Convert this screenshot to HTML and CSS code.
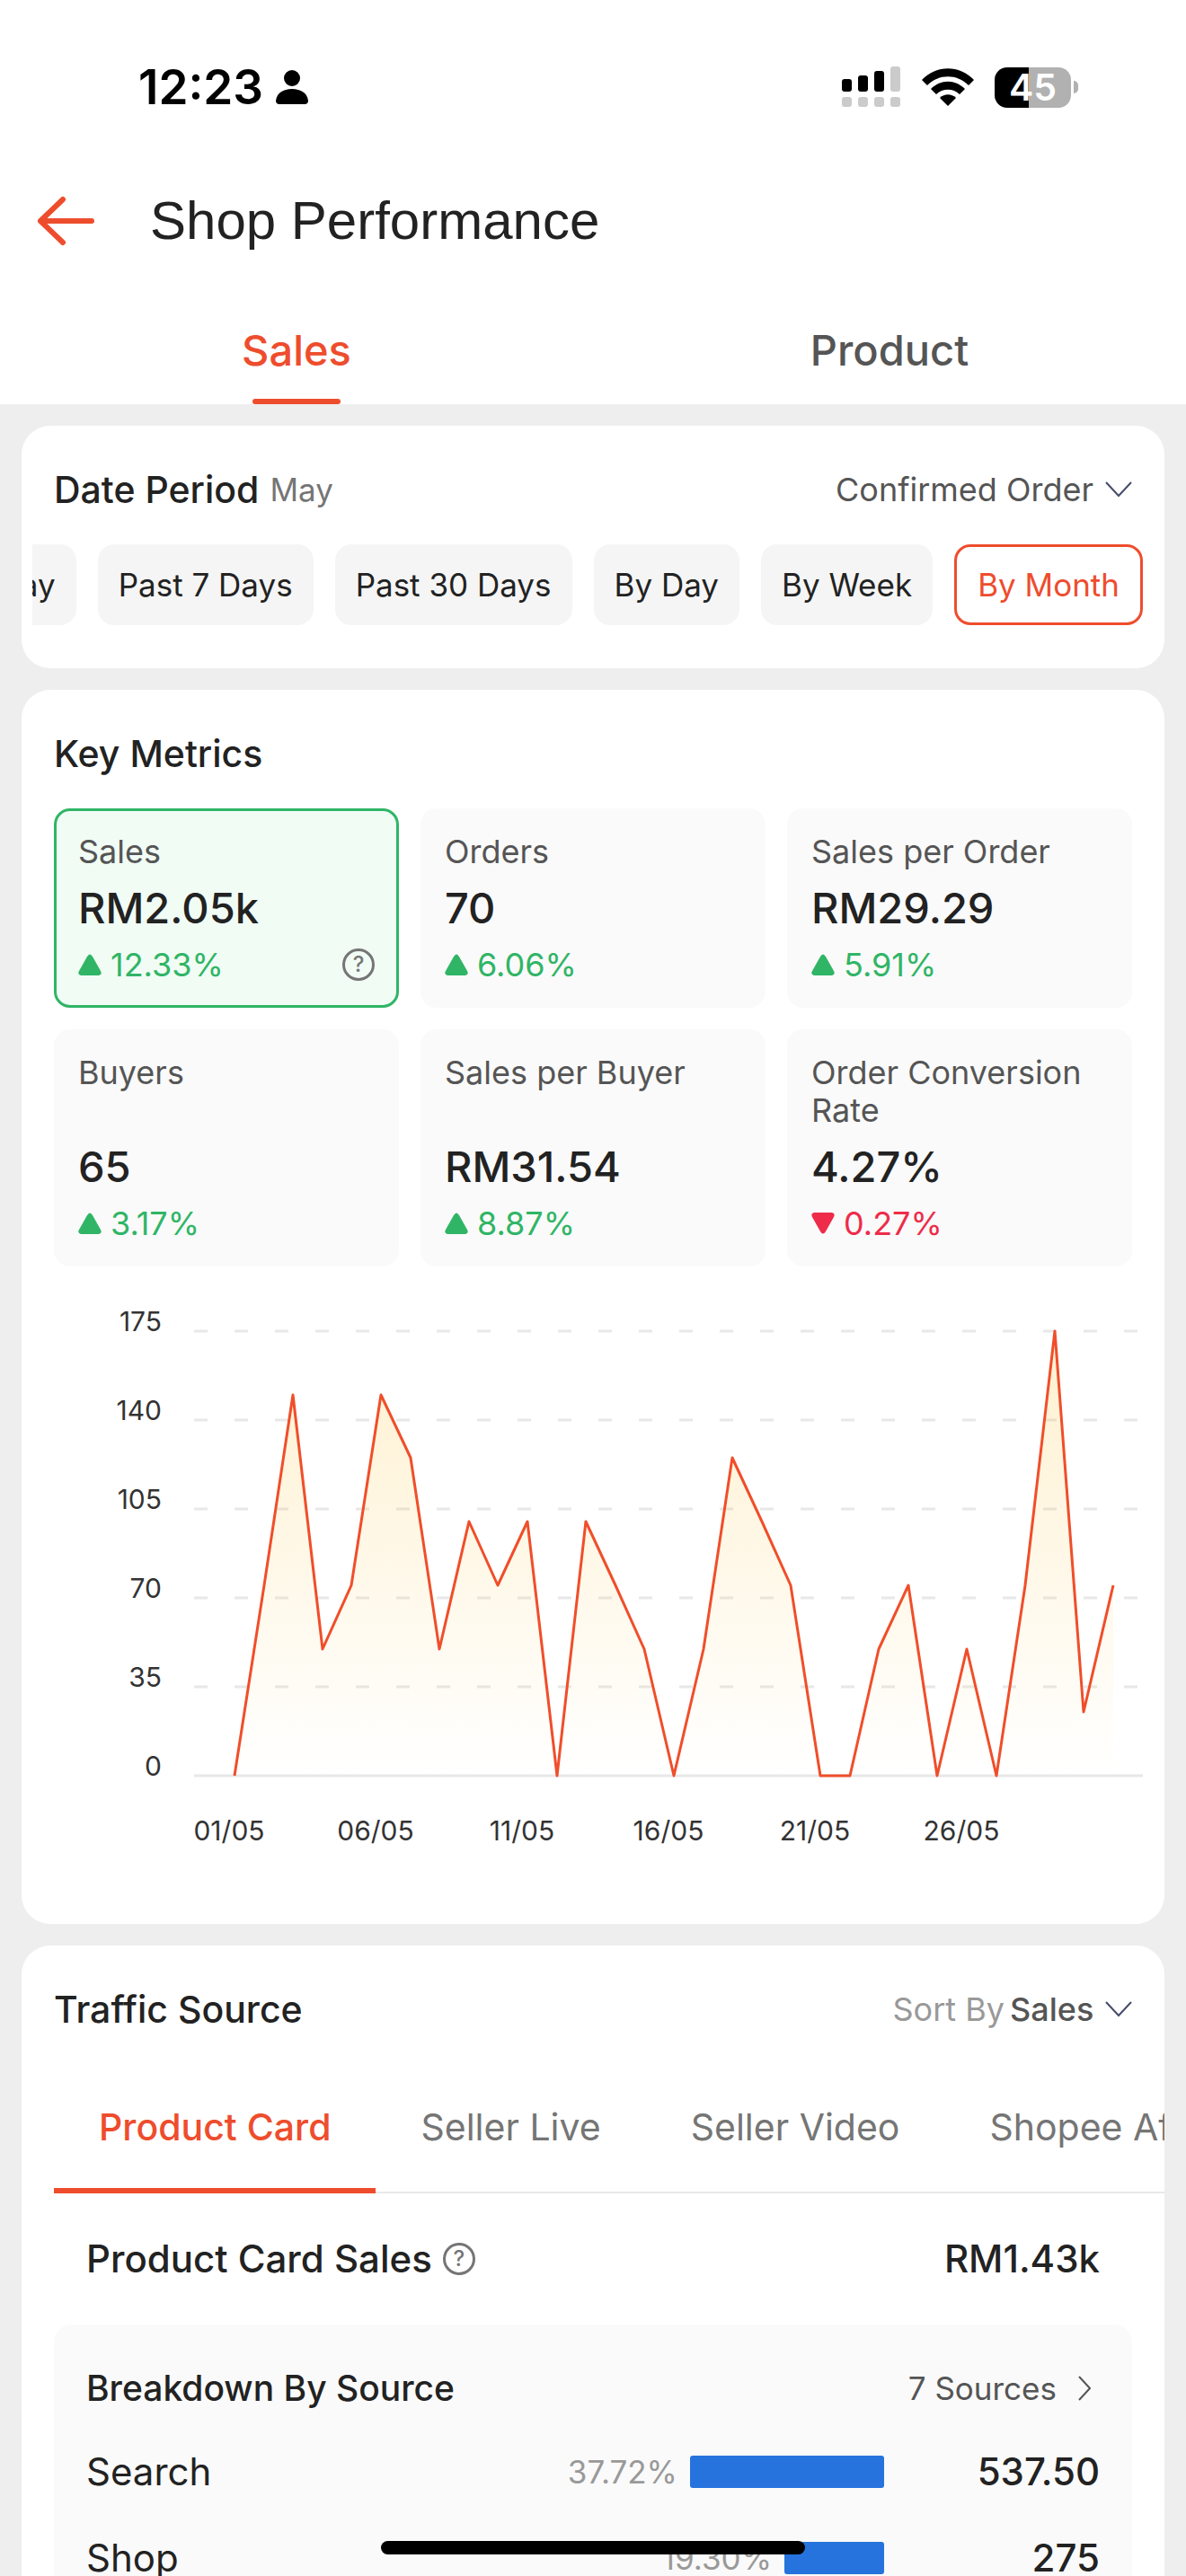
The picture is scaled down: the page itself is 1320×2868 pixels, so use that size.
FILE: index.html
```html
<!DOCTYPE html>
<html lang="en">

<head>
    <meta charset="UTF-8">
    <meta name="viewport" content="width=device-width, initial-scale=1.0">
    <title>Shop Performance</title>
    <link rel="stylesheet" href="styles.css">
</head>

<body>
    <div class="page">
        <header class="top">
            <div class="status-bar">
                <div class="status-left">
                    <span class="time">12:23</span>
                    <svg width="36" height="38" viewBox="0 0 36 38">
                        <ellipse cx="18" cy="9" rx="9" ry="9" />
                        <path d="M4 38 Q0 38 0 34 C1 26 8 21 18 21 C28 21 35 26 36 34 Q36 38 32 38 Z" />
                    </svg>
                </div>
                <div class="status-right">
                    <svg width="66" height="46" viewBox="0 0 66 46">
                        <rect x="0" y="14" width="11" height="14" rx="3" />
                        <rect x="18" y="10" width="11" height="18" rx="3" />
                        <rect x="36" y="5" width="11" height="23" rx="3" />
                        <g fill="#cbcbcb">
                            <rect x="54" y="0" width="11" height="28" rx="3" />
                            <rect x="0" y="34" width="11" height="11" rx="3" />
                            <rect x="18" y="34" width="11" height="11" rx="3" />
                            <rect x="36" y="34" width="11" height="11" rx="3" />
                            <rect x="54" y="34" width="11" height="11" rx="3" />
                        </g>
                    </svg>
                    <svg width="58" height="42" viewBox="0 0 58 42">
                        <path d="M0 13 C16 -4 42 -4 58 13 L52 19 C39 6 19 6 6 19 Z" />
                        <path d="M10 23 C21 12 37 12 48 23 L42 29 C35 22 23 22 16 29 Z" />
                        <path d="M20 33 C25 28 33 28 38 33 L29 42 Z" />
                    </svg>
                    <div class="battery">
                        <span class="battery-body">45</span>
                        <span class="battery-tip"></span>
                    </div>
                </div>
            </div>

            <div class="title-bar">
                <button class="back" aria-label="Back">
                    <svg width="66" height="60" viewBox="0 0 66 60">
                        <path d="M31 6 L6 30 L31 54 M6 30 H63" fill="none" stroke="#ee4d2d" stroke-width="6" stroke-linecap="round" stroke-linejoin="round" />
                    </svg>
                </button>
                <h1>Shop Performance</h1>
            </div>

            <nav class="main-tabs">
                <a href="#sales" class="active">Sales</a>
                <a href="#product">Product</a>
            </nav>
        </header>

        <main class="content">
            <section class="card">
                <div class="card-head">
                    <h2>Date Period</h2>
                    <span class="period">May</span>
                    <div class="picker">
                        <select aria-label="Order type">
                            <option>Confirmed Order</option>
                        </select>
                        <svg width="30" height="18" viewBox="0 0 30 18">
                            <path d="M1 1 L15 16 L29 1" fill="none" stroke="#454b6b" stroke-width="2" />
                        </svg>
                    </div>
                </div>
                <div class="chips">
                    <button>Yesterday</button>
                    <button>Past 7 Days</button>
                    <button>Past 30 Days</button>
                    <button>By Day</button>
                    <button>By Week</button>
                    <button class="active">By Month</button>
                </div>
            </section>

            <section class="card">
                <div class="card-head">
                    <h2>Key Metrics</h2>
                </div>
                <div class="metrics">
                    <div class="metric active">
                        <div class="label">Sales</div>
                        <div class="value">RM2.05k</div>
                        <div class="change up">
                            <svg width="26" height="24" viewBox="0 0 26 24"><path d="M3 24 Q-1 23 1 19 L10 3 Q13 -2 16 3 L25 19 Q27 23 23 24 Z" /></svg>
                            12.33%
                            <button class="help" aria-label="About sales">?</button>
                        </div>
                    </div>
                    <div class="metric">
                        <div class="label">Orders</div>
                        <div class="value">70</div>
                        <div class="change up">
                            <svg width="26" height="24" viewBox="0 0 26 24"><path d="M3 24 Q-1 23 1 19 L10 3 Q13 -2 16 3 L25 19 Q27 23 23 24 Z" /></svg>
                            6.06%
                        </div>
                    </div>
                    <div class="metric">
                        <div class="label">Sales per Order</div>
                        <div class="value">RM29.29</div>
                        <div class="change up">
                            <svg width="26" height="24" viewBox="0 0 26 24"><path d="M3 24 Q-1 23 1 19 L10 3 Q13 -2 16 3 L25 19 Q27 23 23 24 Z" /></svg>
                            5.91%
                        </div>
                    </div>
                    <div class="metric">
                        <div class="label">Buyers</div>
                        <div class="value">65</div>
                        <div class="change up">
                            <svg width="26" height="24" viewBox="0 0 26 24"><path d="M3 24 Q-1 23 1 19 L10 3 Q13 -2 16 3 L25 19 Q27 23 23 24 Z" /></svg>
                            3.17%
                        </div>
                    </div>
                    <div class="metric">
                        <div class="label">Sales per Buyer</div>
                        <div class="value">RM31.54</div>
                        <div class="change up">
                            <svg width="26" height="24" viewBox="0 0 26 24"><path d="M3 24 Q-1 23 1 19 L10 3 Q13 -2 16 3 L25 19 Q27 23 23 24 Z" /></svg>
                            8.87%
                        </div>
                    </div>
                    <div class="metric">
                        <div class="label">Order Conversion Rate</div>
                        <div class="value">4.27%</div>
                        <div class="change down">
                            <svg width="26" height="24" viewBox="0 0 26 24"><path d="M3 0 Q-1 1 1 5 L10 21 Q13 26 16 21 L25 5 Q27 1 23 0 Z" /></svg>
                            0.27%
                        </div>
                    </div>
                </div>

                <svg class="chart" viewBox="0 0 1272 732" role="img" aria-label="Sales by day in May">
                    <defs>
                        <linearGradient id="fill" x1="0" y1="72" x2="0" y2="567" gradientUnits="userSpaceOnUse">
                            <stop offset="0" stop-color="#fdb813" stop-opacity="0.2" />
                            <stop offset="1" stop-color="#fdb813" stop-opacity="0" />
                        </linearGradient>
                    </defs>
                    <!-- grid -->
                    <g stroke="#e8e8e8" stroke-width="3">
                        <path d="M192 72 H1248 M192 171 H1248 M192 270 H1248 M192 369 H1248 M192 468 H1248" stroke-dasharray="15 30" />
                        <path d="M192 567 H1248" />
                    </g>
                    <!-- area and line, one point per day -->
                    <path fill="url(#fill)" d="M237 567 L270 355 L302 143 L335 426 L367 355 L400 143 L433 213 L465 426 L498 284 L530 355 L563 284 L596 567 L628 284 L661 355 L693 426 L726 567 L759 426 L791 213 L824 284 L856 355 L889 567 L922 567 L954 426 L987 355 L1019 567 L1052 426 L1085 567 L1117 355 L1150 72 L1182 496 L1215 355 V567 Z" />
                    <polyline fill="none" stroke="#f04e2a" stroke-width="3" stroke-linejoin="round" points="237,567 270,355 302,143 335,426 367,355 400,143 433,213 465,426 498,284 530,355 563,284 596,567 628,284 661,355 693,426 726,567 759,426 791,213 824,284 856,355 889,567 922,567 954,426 987,355 1019,567 1052,426 1085,567 1117,355 1150,72 1182,496 1215,355" />
                    <g class="y-axis">
                        <text x="156" y="72">175</text>
                        <text x="156" y="171">140</text>
                        <text x="156" y="270">105</text>
                        <text x="156" y="369">70</text>
                        <text x="156" y="468">35</text>
                        <text x="156" y="567">0</text>
                    </g>
                    <g class="x-axis">
                        <text x="231" y="639">01/05</text>
                        <text x="394" y="639">06/05</text>
                        <text x="557" y="639">11/05</text>
                        <text x="720" y="639">16/05</text>
                        <text x="883" y="639">21/05</text>
                        <text x="1046" y="639">26/05</text>
                    </g>
                </svg>
            </section>

            <section class="card">
                <div class="card-head">
                    <h2>Traffic Source</h2>
                    <div class="picker">
                        <label for="sort">Sort By</label>
                        <select id="sort" class="strong">
                            <option>Sales</option>
                        </select>
                        <svg width="30" height="18" viewBox="0 0 30 18">
                            <path d="M1 1 L15 16 L29 1" fill="none" stroke="#454b6b" stroke-width="2" />
                        </svg>
                    </div>
                </div>
                <nav class="source-tabs">
                    <a href="#card" class="active">Product Card</a>
                    <a href="#live">Seller Live</a>
                    <a href="#video">Seller Video</a>
                    <a href="#affiliate">Shopee Affiliate</a>
                </nav>
                <div class="total">
                    <span>Product Card Sales</span>
                    <button class="help" aria-label="About product card sales">?</button>
                    <span class="amount">RM1.43k</span>
                </div>
                <div class="breakdown">
                    <div class="breakdown-head">
                        <h3>Breakdown By Source</h3>
                        <a href="#sources">7 Sources
                            <svg width="14" height="28" viewBox="0 0 14 28">
                                <path d="M1 1 L13 14 L1 27" fill="none" stroke="#555" stroke-width="2" />
                            </svg>
                        </a>
                    </div>
                    <table>
                        <tr>
                            <th>Search</th>
                            <td>
                                <div class="share">37.72% <span class="bar" style="width: 216px"></span></div>
                            </td>
                            <td class="amount">537.50</td>
                        </tr>
                        <tr>
                            <th>Shop</th>
                            <td>
                                <div class="share">19.30% <span class="bar" style="width: 111px"></span></div>
                            </td>
                            <td class="amount">275</td>
                        </tr>
                    </table>
                </div>
            </section>
        </main>

        <div class="home-indicator"></div>
    </div>
</body>

</html>
```
FILE: styles.css
```css
* {
    box-sizing: border-box;
}

body {
    margin: 0;
    font-family: Inter, "Liberation Sans", sans-serif;
    font-size: 35px;
    line-height: 42px;
    color: #222;
    background-color: #eee;
}

h1,
h2,
h3 {
    margin: 0;
}

a {
    text-decoration: none;
    color: inherit;
}

button,
select {
    font: inherit;
    color: inherit;
    border: none;
    background: none;
    padding: 0;
    cursor: pointer;
}

svg {
    display: block;
    flex-shrink: 0;
}

.page {
    position: relative;
    height: 100vh;
    overflow: hidden;
}

/* header */
.top {
    background-color: #fff;
}

.status-bar {
    display: flex;
    justify-content: space-between;
    align-items: center;
    padding: 66px 120px 0 154px;
    color: #000;
}

.status-left,
.status-right {
    display: flex;
    align-items: center;
}

.status-left {
    gap: 14px;
}

.status-right {
    gap: 23px;
}

.time {
    font-size: 53px;
    line-height: 62px;
    font-weight: 600;
}

.battery {
    display: flex;
    align-items: center;
    gap: 3px;
}

.battery-body {
    width: 85px;
    height: 45px;
    border-radius: 14px;
    background: linear-gradient(to right, #000 45%, #b1b1b1 45%);
    color: #fff;
    font-size: 41px;
    line-height: 45px;
    font-weight: 600;
    text-align: center;
}

.battery-tip {
    width: 5px;
    height: 14px;
    border-radius: 0 5px 5px 0;
    background-color: #b1b1b1;
}

.title-bar {
    display: flex;
    align-items: center;
    gap: 62px;
    padding: 82px 39px 0;
}

.title-bar h1 {
    font-family: "Liberation Sans", Arial, sans-serif;
    font-size: 60px;
    line-height: 72px;
    font-weight: 400;
}

.main-tabs {
    display: flex;
    padding-top: 68px;
}

.main-tabs a {
    flex: 1;
    display: flex;
    flex-direction: column;
    align-items: center;
    gap: 14px;
    font-size: 47px;
    line-height: 80px;
    font-weight: 500;
    color: #555;
}

.main-tabs a::after {
    content: "";
    width: 98px;
    height: 6px;
    border-radius: 3px;
}

.main-tabs a.active {
    color: #ee4d2d;
}

.main-tabs a.active::after {
    background-color: #ee4d2d;
}

/* cards */
.content {
    display: flex;
    flex-direction: column;
    gap: 24px;
    padding: 24px;
}

.card {
    background-color: #fff;
    border-radius: 32px;
    overflow: hidden;
}

.card-head {
    display: flex;
    align-items: center;
    gap: 12px;
    padding: 46px 36px 36px;
}

h2 {
    font-size: 41px;
    line-height: 50px;
    font-weight: 500;
}

.period {
    color: #757575;
}

.picker {
    display: flex;
    align-items: center;
    margin-left: auto;
    font-size: 36px;
    color: #555;
}

.picker label {
    margin-right: 6px;
    color: #999;
}

.picker select {
    appearance: none;
    margin-right: 12px;
}

.picker .strong {
    font-weight: 500;
}

.chips {
    display: flex;
    justify-content: flex-end;
    gap: 24px;
    margin-left: 12px;
    padding: 0 24px 48px 0;
    overflow: hidden;
}

.chips button {
    flex-shrink: 0;
    height: 90px;
    padding: 0 23px;
    border-radius: 18px;
    background-color: #f5f5f5;
    white-space: nowrap;
}

.chips button.active {
    border: 3px solid #ee4d2d;
    background-color: #fff;
    color: #ee4d2d;
}

/* key metrics */
.metrics {
    display: grid;
    grid-template-columns: repeat(3, 1fr);
    gap: 24px;
    padding: 0 36px;
}

.metric {
    display: flex;
    flex-direction: column;
    gap: 12px;
    padding: 24px;
    border: 3px solid #fafafa;
    border-radius: 18px;
    background-color: #fafafa;
    font-size: 36px;
}

.metric.active {
    border-color: #30b566;
    background-color: #f1fcf5;
}

.label {
    flex: 1;
    color: #555;
}

.value {
    font-size: 47px;
    line-height: 60px;
    font-weight: 500;
}

.change {
    display: flex;
    align-items: center;
    gap: 10px;
}

.change svg {
    fill: currentColor;
}

.up {
    color: #30b566;
}

.down {
    color: #ee2c4a;
}

.help {
    width: 36px;
    height: 36px;
    border: 3px solid #757575;
    border-radius: 50%;
    color: #757575;
    font-size: 24px;
    line-height: 30px;
    font-weight: 500;
}

.change .help {
    margin-left: auto;
}

.chart {
    width: 100%;
}

.chart text {
    font-size: 30px;
    fill: #333;
}

.y-axis {
    text-anchor: end;
}

.x-axis {
    text-anchor: middle;
}

/* traffic source */
.source-tabs {
    display: flex;
    margin-left: 36px;
    box-shadow: inset 0 -2px #e8e8e8;
    overflow: hidden;
}

.source-tabs a {
    flex-shrink: 0;
    padding: 45px 50px 43px;
    border-bottom: 6px solid transparent;
    font-size: 41px;
    line-height: 50px;
    color: #757575;
}

.source-tabs a.active {
    border-color: #ee4d2d;
    color: #ee4d2d;
    font-weight: 500;
}

.total {
    display: flex;
    align-items: center;
    gap: 12px;
    padding: 48px 72px;
    font-size: 42px;
    line-height: 50px;
    font-weight: 500;
}

.amount {
    margin-left: auto;
    font-weight: 500;
}

.breakdown {
    margin: 0 36px;
    padding: 46px 36px;
    border-radius: 20px;
    background-color: #fafafa;
}

.breakdown-head {
    display: flex;
    justify-content: space-between;
    align-items: center;
    padding-bottom: 20px;
}

.breakdown h3 {
    font-size: 39px;
    line-height: 50px;
    font-weight: 500;
}

.breakdown-head a {
    display: flex;
    align-items: center;
    gap: 24px;
    padding-right: 10px;
    color: #555;
}

.breakdown table {
    width: 100%;
    border-collapse: collapse;
    font-size: 42px;
}

.breakdown th,
.breakdown td {
    height: 96px;
    padding: 0;
}

.breakdown th {
    font-weight: 400;
    text-align: left;
}

.breakdown td.amount {
    width: 240px;
    text-align: right;
}

.share {
    display: flex;
    justify-content: flex-end;
    align-items: center;
    gap: 14px;
    font-size: 35px;
    color: #999;
}

.bar {
    height: 36px;
    border-radius: 3px;
    background-color: #2673dd;
}

.home-indicator {
    position: absolute;
    left: 50%;
    bottom: 24px;
    width: 472px;
    height: 15px;
    margin-left: -236px;
    border-radius: 8px;
    background-color: #000;
}
```
